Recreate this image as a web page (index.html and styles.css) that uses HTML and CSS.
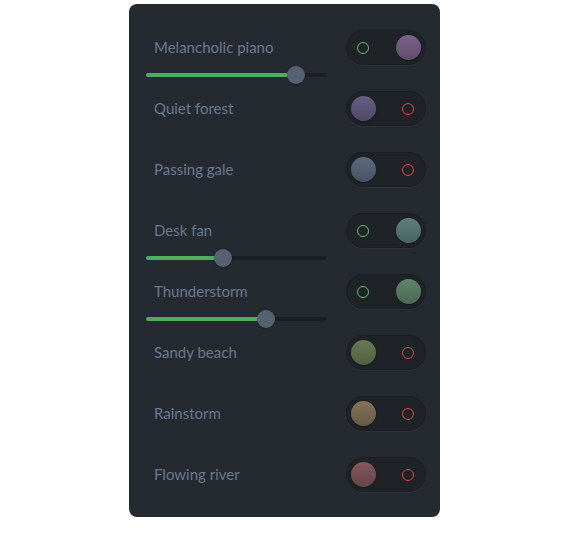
FILE: index.html
```html
<!DOCTYPE html>
<html lang="en">
<head>
<meta charset="utf-8">
<title>Ambient sounds</title>
<link rel="stylesheet" href="styles.css">
</head>
<body>
<div class="panel">
  <div class="row">
    <span class="label">Melancholic piano</span>
    <div class="toggle on"><span class="ring"></span><span class="knob k-piano"></span></div>
    <div class="slider"><span class="fill" style="width:83.3%"></span><span class="thumb"></span><span class="rest"></span></div>
  </div>
  <div class="row">
    <span class="label">Quiet forest</span>
    <div class="toggle"><span class="knob k-forest"></span><span class="ring"></span></div>
  </div>
  <div class="row">
    <span class="label">Passing gale</span>
    <div class="toggle"><span class="knob k-gale"></span><span class="ring"></span></div>
  </div>
  <div class="row">
    <span class="label">Desk fan</span>
    <div class="toggle on"><span class="ring"></span><span class="knob k-fan"></span></div>
    <div class="slider"><span class="fill" style="width:42.8%"></span><span class="thumb"></span><span class="rest"></span></div>
  </div>
  <div class="row">
    <span class="label">Thunderstorm</span>
    <div class="toggle on"><span class="ring"></span><span class="knob k-thunder"></span></div>
    <div class="slider"><span class="fill" style="width:66.7%"></span><span class="thumb"></span><span class="rest"></span></div>
  </div>
  <div class="row">
    <span class="label">Sandy beach</span>
    <div class="toggle"><span class="knob k-beach"></span><span class="ring"></span></div>
  </div>
  <div class="row">
    <span class="label">Rainstorm</span>
    <div class="toggle"><span class="knob k-rain"></span><span class="ring"></span></div>
  </div>
  <div class="row">
    <span class="label">Flowing river</span>
    <div class="toggle"><span class="knob k-river"></span><span class="ring"></span></div>
  </div>
</div>
</body>
</html>
```
FILE: styles.css
```css
html, body {
  margin: 0;
  padding: 0;
  background: #ffffff;
}
body {
  font-family: Lato, "Open Sans", sans-serif;
}
.panel {
  box-sizing: border-box;
  width: 311px;
  height: 513px;
  margin: 4px 0 0 129px;
  padding: 26px 14px 0 25px;
  background: #252930;
  border-radius: 8px;
}
.row {
  display: grid;
  grid-template-columns: 1fr 80px;
  grid-template-rows: 35px 26px;
  align-items: center;
}
.label {
  color: #697a91;
  font-size: 15px;
  line-height: 20px;
  margin-top: -2px;
}
.toggle {
  box-sizing: border-box;
  width: 80px;
  height: 35px;
  border-radius: 18px;
  background: #1f2328;
  box-shadow: 0 1px 0 rgba(255,255,255,0.04), inset 0 0 0 1px rgba(0,0,0,0.12);
  display: flex;
  align-items: center;
  justify-content: space-between;
  padding: 0 5px;
}
.toggle .ring {
  box-sizing: border-box;
  width: 12px;
  height: 12px;
  border-radius: 50%;
  border: 1.3px solid #e0434a;
  margin: 0 7px 0 0;
}
.toggle.on .ring {
  border-color: #58c26a;
  margin: 0 0 0 6px;
}
.knob {
  width: 25px;
  height: 25px;
  border-radius: 50%;
  box-shadow: 0 1px 2px rgba(0,0,0,0.35);
}
.k-piano { background: linear-gradient(#7b6487, #5f4c69); }
.k-forest { background: linear-gradient(#675f86, #4f4866); }
.k-gale { background: linear-gradient(#5b6a80, #465366); }
.k-fan { background: linear-gradient(#5f7f7b, #4a6360); }
.k-thunder { background: linear-gradient(#61846a, #4b6852); }
.k-beach { background: linear-gradient(#677a54, #505f41); }
.k-rain { background: linear-gradient(#85735a, #675944); }
.k-river { background: linear-gradient(#845a5d, #664446); }
.slider {
  grid-column: 1 / 2;
  grid-row: 2;
  align-self: start;
  margin: 1px 0 0 -8px;
  width: 180px;
  height: 18px;
  display: flex;
  align-items: center;
}
.fill {
  height: 4px;
  background: #4fae5e;
  border-radius: 2px 0 0 2px;
}
.thumb {
  flex: none;
  width: 18px;
  height: 18px;
  margin: 0 -9px;
  border-radius: 50%;
  background: #566172;
  position: relative;
  z-index: 1;
  box-shadow: 0 1px 2px rgba(0,0,0,0.3);
}
.rest {
  flex: 1;
  height: 4px;
  background: #1b1e23;
  border-radius: 0 2px 2px 0;
}
```
